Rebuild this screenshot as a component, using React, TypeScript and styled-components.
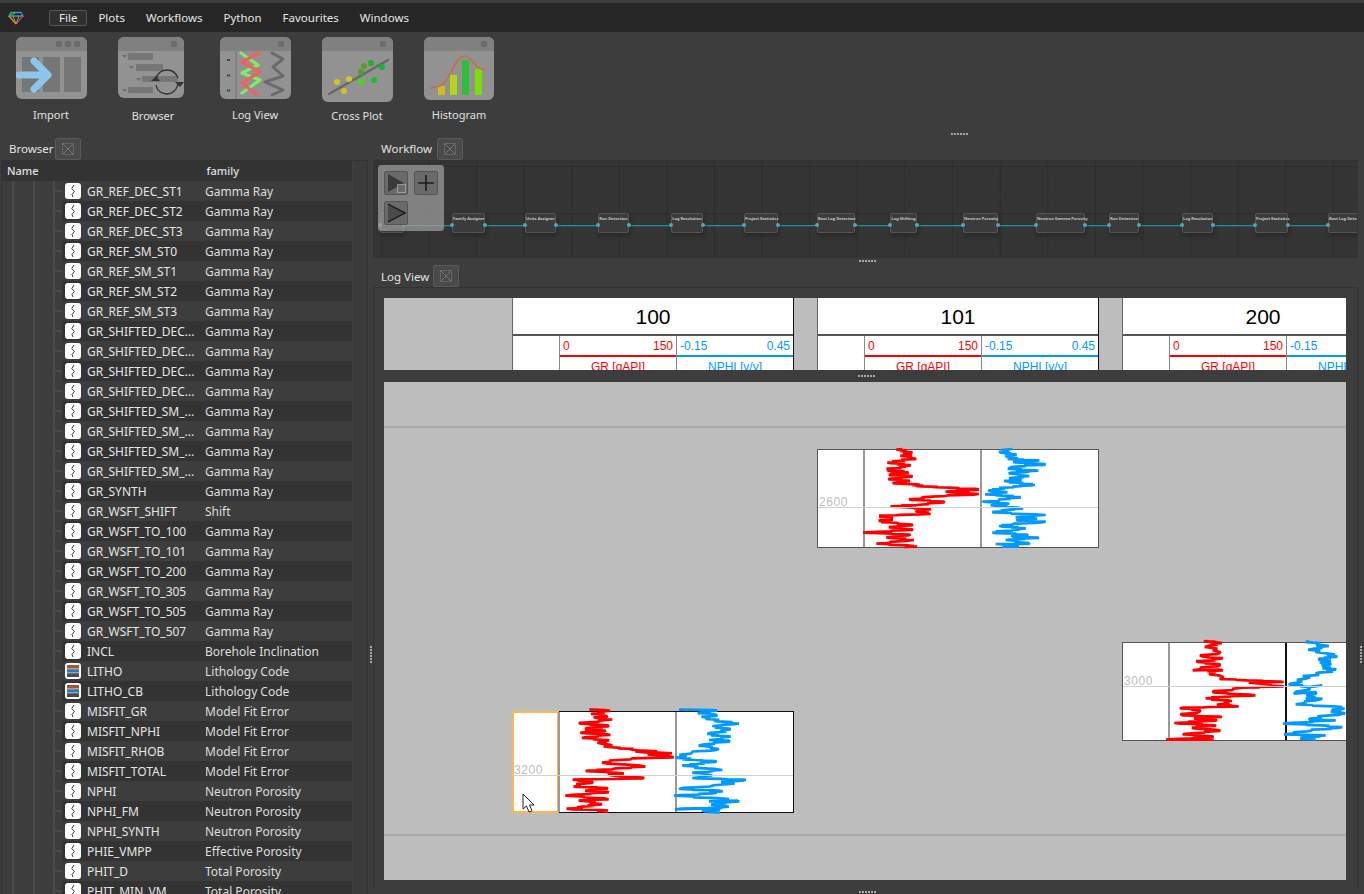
import styled, { createGlobalStyle } from 'styled-components';

const GlobalStyle = createGlobalStyle`
  html, body {
    margin: 0;
    background: #3d3d3d;
  }
  * {
    box-sizing: border-box;
  }
`;

const Root = styled.div`
  width: 1364px;
  height: 894px;
  overflow: hidden;
  display: flex;
  flex-direction: column;
  background: #3d3d3d;
  color: #e2e2e2;
  font-family: 'Noto Sans', 'Open Sans', sans-serif;
  font-size: 12px;
`;

const MenuBar = styled.div`
  height: 29px;
  margin-top: 3px;
  padding-left: 8px;
  display: flex;
  align-items: center;
  background: #262626;
`;

const MenuItems = styled.div`
  display: flex;
  margin-left: 25px;
  gap: 1px;
`;

const MenuItem = styled.div<{ $active?: boolean }>`
  height: 16px;
  padding: 0 9px;
  line-height: 14px;
  border: 1px solid ${(p) => (p.$active ? '#555' : 'transparent')};
  border-radius: 2px;
  background: ${(p) => (p.$active ? '#303030' : 'transparent')};
  color: #e6e6e6;
  font-size: 11.5px;
  white-space: nowrap;
`;

const Toolbar = styled.div`
  height: 105px;
  display: flex;
  flex-direction: column;
`;

const Tools = styled.div`
  display: flex;
  height: 98px;
`;

const Tool = styled.div<{ $nudge?: number }>`
  width: 102px;
  height: 98px;
  padding: 5px ${(p) => (p.$nudge ?? 0) * 2}px 0 0;
  position: relative;
  display: flex;
  justify-content: center;

  svg {
    display: block;
  }
`;

const ToolLabel = styled.div<{ $low?: boolean }>`
  position: absolute;
  left: 0;
  right: 0;
  top: ${(p) => (p.$low ? 76 : 75)}px;
  text-align: center;
  font-size: 11px;
  line-height: 16px;
  color: #e0e0e0;
`;

const Grip = styled.div<{ $vertical?: boolean }>`
  display: flex;
  flex-direction: ${(p) => (p.$vertical ? 'column' : 'row')};
  gap: 1px;

  i {
    width: 2px;
    height: 2px;
    background: #a8a8a8;
  }
`;

const ToolbarGrip = styled(Grip)`
  margin: 3px 0 0 951px;
`;

const Main = styled.div`
  flex: 1;
  display: flex;
  min-height: 0;
`;

const DockHeader = styled.div<{ $height?: number; $indent: number }>`
  height: ${(p) => p.$height ?? 23}px;
  display: flex;
  align-items: center;
  padding-left: ${(p) => p.$indent}px;
  font-size: 11.5px;
  color: #e4e4e4;
`;

const DockTitle = styled.div<{ $width: number }>`
  width: ${(p) => p.$width}px;
  white-space: nowrap;
`;

const CloseButton = styled.div`
  width: 26px;
  height: 22px;
  display: flex;
  align-items: center;
  justify-content: center;
  background: #4a4a4a;
  border: 1px solid #5a5a5a;
  border-radius: 2px;
`;

const LeftDock = styled.div`
  width: 368px;
  display: flex;
  flex-direction: column;
`;

const BrowserPanel = styled.div`
  flex: 1;
  display: flex;
  min-height: 0;
  margin-left: 1px;
  border: 1px solid #333;
  border-bottom: none;
  overflow: hidden;
`;

const TreeColumn = styled.div`
  width: 350px;
  flex-shrink: 0;
`;

const TreeHeader = styled.div`
  height: 20px;
  display: flex;
  align-items: center;
  padding: 0 0 2px 5px;
  background: #333;
  font-size: 11px;
  font-weight: 500;
  color: #e0e0e0;

  span:last-child {
    margin-left: 168px;
  }
`;

const ScrollTrack = styled.div`
  flex: 1;
  background: #3b3b3b;
  border-left: 1px solid #404040;
`;

const Row = styled.div`
  height: 20px;
  display: flex;
  align-items: center;
`;

const Guides = styled.div`
  width: 60px;
  height: 20px;
  flex-shrink: 0;
  background:
    linear-gradient(#4a4a4a, #4a4a4a) 10px 0 / 2px 100% no-repeat,
    linear-gradient(#4a4a4a, #4a4a4a) 31px 0 / 2px 100% no-repeat,
    linear-gradient(#4a4a4a, #4a4a4a) 51px 0 / 2px 100% no-repeat,
    linear-gradient(#4a4a4a, #4a4a4a) 52px 9px / 8px 2px no-repeat;
`;

const RowBody = styled.div<{ $odd: boolean }>`
  flex: 1;
  height: 20px;
  display: flex;
  align-items: center;
  padding-left: 3px;
  background: ${(p) => (p.$odd ? '#333333' : 'transparent')};
`;

const KindIcon = styled.div`
  width: 16px;
  height: 16px;
  flex-shrink: 0;
  background: #fff;
  border-radius: 3px;
  display: flex;
  align-items: center;
  justify-content: center;
`;

const RowName = styled.div`
  width: 118px;
  margin-left: 6px;
  white-space: nowrap;
  overflow: hidden;
  color: #e6e6e6;
`;

const RowFamily = styled.div`
  white-space: nowrap;
  color: #dedede;
`;

const Splitter = styled.div<{ $width: number }>`
  width: ${(p) => p.$width}px;
  flex-shrink: 0;
  display: flex;
  justify-content: center;
  padding-top: 509px;
`;

const RightDock = styled.div`
  width: 985px;
  display: flex;
  flex-direction: column;
`;

const WorkflowCanvas = styled.div`
  height: 98px;
  position: relative;
  overflow: hidden;
  border: 1px solid #333;
  background-color: #353535;
  background-image:
    linear-gradient(90deg, #2c2c2c 1px, transparent 1px),
    linear-gradient(#2c2c2c 1px, transparent 1px),
    linear-gradient(90deg, #333 1px, transparent 1px),
    linear-gradient(#333 1px, transparent 1px);
  background-size: 47.6px 47.6px, 47.6px 47.6px, 4.76px 4.76px, 4.76px 4.76px;
  background-position: 7px 5px, 7px 5px, 7px 5px, 7px 5px;
`;

const Edge = styled.div`
  position: absolute;
  left: 12px;
  right: 0;
  top: 64px;
  height: 1px;
  background: #2c8d95;
  box-shadow: 0 1px 1px #1f5b60;
`;

const FlowNode = styled.div<{ $left: number; $width: number }>`
  position: absolute;
  left: ${(p) => p.$left}px;
  width: ${(p) => p.$width}px;
  top: 52px;
  height: 20px;
  background: #3b3b3b;
  border: 1px solid #555;
  border-radius: 2px;
  box-shadow: 1px 3px 4px #282828;
  font-size: 4px;
  font-weight: 700;
  line-height: 9px;
  text-align: center;
  color: #c4c4c4;
  white-space: nowrap;
`;

const Port = styled.i<{ $side: 'left' | 'right' }>`
  position: absolute;
  top: 9px;
  ${(p) => p.$side}: -3px;
  width: 4px;
  height: 4px;
  border-radius: 50%;
  background: #46aab8;
`;

const FlowTools = styled.div`
  position: absolute;
  left: 4px;
  top: 4px;
  width: 66px;
  height: 66px;
  padding: 6px;
  display: flex;
  flex-wrap: wrap;
  align-content: flex-start;
  gap: 6px;
  background: rgba(160, 160, 160, 0.72);
  border-radius: 3px;
`;

const FlowButton = styled.div`
  width: 24px;
  height: 24px;
  display: flex;
  align-items: center;
  justify-content: center;
  background: #6a6a6a;
  border: 1px solid #555;
  border-radius: 2px;
`;

const CenterGrip = styled(Grip)`
  height: 7px;
  padding: 2px 0 0 486px;
`;

const LogPanel = styled.div`
  height: 601px;
  padding: 10px 11px 0 10px;
  border: 1px solid #333;
  border-bottom: none;
  display: flex;
  flex-direction: column;
`;

const LogHeader = styled.div`
  height: 72px;
  display: flex;
  gap: 23px;
  padding-left: 128px;
  overflow: hidden;
  background: #bdbdbd;
  font-family: 'Liberation Sans', Arial, sans-serif;
`;

const WellHeader = styled.div`
  width: 282px;
  flex-shrink: 0;
  height: 90px;
  background: #fff;
  border-left: 1px solid #666;
  border-right: 1px solid #111;
`;

const WellTitle = styled.div`
  height: 38px;
  line-height: 38px;
  text-align: center;
  font-size: 21px;
  color: #000;
  border-bottom: 2px solid #555;
`;

const TrackHeads = styled.div`
  display: flex;
  height: 52px;
`;

const DepthHead = styled.div`
  width: 46px;
`;

const TrackHead = styled.div<{ $color: string; $width: number }>`
  width: ${(p) => p.$width}px;
  color: ${(p) => p.$color};
  border-left: 1px solid #888;
  font-size: 12px;
`;

const ScaleRow = styled.div<{ $color: string }>`
  height: 21px;
  padding: 3px 3px 0 3px;
  line-height: 14px;
  display: flex;
  justify-content: space-between;
  border-bottom: 2px solid ${(p) => p.$color};
`;

const TrackName = styled.div`
  text-align: center;
  font-size: 12px;
  line-height: 20px;
`;

const HeaderGrip = styled(Grip)`
  height: 12px;
  padding: 5px 0 0 474px;
`;

const LogCanvas = styled.div`
  height: 498px;
  display: flex;
  gap: 23px;
  padding-left: 128px;
  overflow: hidden;
  position: relative;
  background:
    linear-gradient(#a9a9a9, #a9a9a9) 0 44px / 100% 2px no-repeat,
    linear-gradient(#a9a9a9, #a9a9a9) 0 452px / 100% 2px no-repeat,
    #bdbdbd;
  font-family: 'Liberation Sans', Arial, sans-serif;
`;

const WellColumn = styled.div<{ $top: number }>`
  width: 282px;
  flex-shrink: 0;
  padding-top: ${(p) => p.$top}px;
`;

const Chart = styled.div<{ $height: number; $frame: string }>`
  position: relative;
  width: 282px;
  height: ${(p) => p.$height}px;
  display: flex;
  background: #fff;
  border: 1px solid ${(p) => p.$frame};
`;

const DepthTrack = styled.div<{ $selected?: boolean }>`
  width: 47px;
  margin: -1px -1px -1px -1px;
  flex-shrink: 0;
  border: 2px solid ${(p) => (p.$selected ? '#ffb650' : 'transparent')};
`;

const CurveTrack = styled.div<{ $width: number; $line: string }>`
  width: ${(p) => p.$width}px;
  flex-shrink: 0;
  border-left: 2px solid ${(p) => p.$line};

  svg {
    display: block;
    overflow: visible;
    margin: -1px 0 0 -2px;
  }
`;

const DepthLine = styled.div<{ $y: number }>`
  position: absolute;
  left: 0;
  right: 0;
  top: ${(p) => p.$y}px;
  height: 1px;
  background: #d0d0d0;
`;

const DepthLabel = styled.div<{ $y: number }>`
  position: absolute;
  left: 1px;
  top: ${(p) => p.$y - 12}px;
  font-size: 12px;
  line-height: 14px;
  letter-spacing: 0.6px;
  color: #bcbcbc;
`;

const Pointer = styled.svg`
  position: absolute;
  left: 9px;
  top: 81px;
`;

const BottomGrip = styled(Grip)`
  padding: 3px 0 0 486px;
`;

function GripDots({ as: Comp = Grip, vertical }: { as?: typeof Grip; vertical?: boolean }) {
  return (
    <Comp $vertical={vertical}>
      {[0, 1, 2, 3, 4, 5].map((i) => (
        <i key={i} />
      ))}
    </Comp>
  );
}

function CloseIcon() {
  return (
    <svg width="14" height="14" viewBox="0 0 14 14" fill="none" stroke="#777" strokeWidth="1">
      <rect x="1.5" y="1.5" width="11" height="11" strokeDasharray="1.5 1" />
      <path d="M2 2l10 10M12 2L2 12" />
    </svg>
  );
}

function CurveGlyph() {
  return (
    <svg width="10" height="14" viewBox="0 0 10 14" fill="none" stroke="#333" strokeWidth="1">
      <path d="M6 1L3.8 4.5 6.4 7.5 4 10.5 5 13" />
    </svg>
  );
}

function LithoGlyph() {
  return (
    <svg width="12" height="12" viewBox="0 0 12 12">
      <rect width="12" height="3.6" fill="#a5562a" />
      <rect y="4.2" width="12" height="3.4" fill="#2f78b7" />
      <rect y="8.2" width="12" height="3.8" fill="#4c4c4c" />
    </svg>
  );
}

function Logo() {
  return (
    <svg width="16" height="14" viewBox="0 0 16 14" fill="none" strokeWidth="1.3">
      <path d="M3 1.5h5L1 5z" stroke="#2fae5a" />
      <path d="M8 1.5h5l2 3.5H1" stroke="#3d8fd0" />
      <path d="M1 5l7 8" stroke="#e8872a" />
      <path d="M15 5l-7 8" stroke="#c0348c" />
      <path d="M5 5l3 8 3-8" stroke="#b5a22c" strokeWidth="1" />
    </svg>
  );
}

function WindowFrame({
  width,
  height,
  dots,
  children,
}: {
  width: number;
  height: number;
  dots: number;
  children?: React.ReactNode;
}) {
  return (
    <svg width={width} height={height} viewBox={`0 0 ${width} ${height}`}>
      <rect width={width} height={height} rx="6" fill="#929292" />
      <path d={`M0 14V6a6 6 0 0 1 6-6h${width - 12}a6 6 0 0 1 6 6v8z`} fill="#808080" />
      {Array.from({ length: dots }).map((_, i) => (
        <rect key={i} x={width - 13 - i * 9} y="4" width="6" height="6" rx="1.5" fill="#6c6c6c" />
      ))}
      {children}
    </svg>
  );
}

function ImportIcon() {
  return (
    <WindowFrame width={71} height={62} dots={3}>
      <rect x="6" y="20" width="17" height="35" fill="#767676" />
      <rect x="27" y="20" width="17" height="35" fill="#767676" />
      <rect x="48" y="20" width="17" height="35" fill="#767676" />
      <path d="M3 38h29M18 24l14 14-14 14" fill="none" stroke="#8cc6ea" strokeWidth="7" strokeLinecap="round" strokeLinejoin="round" />
    </WindowFrame>
  );
}

function BrowserIcon() {
  return (
    <WindowFrame width={66} height={61} dots={1}>
      <path d="M4 18h5l-2.500 3zM11 29h5l-2.500 3zM18 41h5l-2.500 3zM4 52h5l-2.500 3z" fill="#6e6e6e" />
      <rect x="10" y="16" width="25" height="7" rx="1" fill="#767676" />
      <rect x="18" y="27" width="27" height="7" rx="1" fill="#767676" />
      <rect x="24" y="39" width="36" height="6" rx="1" fill="#767676" />
      <rect x="10" y="50" width="25" height="6" rx="1" fill="#767676" />
      <path d="M38 42c1-6 6-9 11-9 5 0 9 3 11 8M60 47c-1 6-6 10-11 10-5 0-10-3-11-9" fill="none" stroke="#333" strokeWidth="1.400" />
      <path d="M33 44l5-5 4 5zM57 45l5 5 4-5z" fill="#333" />
    </WindowFrame>
  );
}

function LogViewIcon() {
  return (
    <WindowFrame width={71} height={62} dots={1}>
      <rect x="15.500" y="14" width="1.500" height="48" fill="#7d7d7d" />
      <path d="M7 23h3.500M7 38.500h3.500M7 53.500h3.500" stroke="#333" strokeWidth="2" strokeDasharray="1.200 0.500" />
      <path d="M21 16l17 12-16 8 18 7-18 13" fill="none" stroke="#82ec6a" strokeWidth="3.200" strokeLinecap="round" strokeLinejoin="round" />
      <path d="M39 16l-17 9 18 10-18 11 15 12" fill="none" stroke="#f4605c" strokeWidth="3.200" strokeLinecap="round" strokeLinejoin="round" />
      <path d="M52 16l11 6-10 8 10 9-18 6 18 8-11 5" fill="none" stroke="#6a6a6a" strokeWidth="3" strokeLinecap="round" strokeLinejoin="round" />
    </WindowFrame>
  );
}

function CrossPlotIcon() {
  const dots: [number, number, string][] = [
    [15, 45, '#d8c21e'], [27, 42, '#c8cc1e'], [22, 54, '#d8c21e'], [39, 45, '#3fdc16'], [39, 35, '#5a9c22'],
    [42, 29, '#5a9c22'], [49, 26, '#18b52c'], [60, 30, '#18b52c'], [52, 43, '#10c428'],
  ];
  return (
    <WindowFrame width={71} height={65} dots={1}>
      <path d="M7 57L66 23" stroke="#686868" strokeWidth="2.500" strokeLinecap="round" />
      {dots.map(([x, y, c], i) => (
        <circle key={i} cx={x} cy={y} r="3" fill={c} />
      ))}
    </WindowFrame>
  );
}

function HistogramIcon() {
  return (
    <WindowFrame width={70} height={63} dots={1}>
      <rect x="14" y="49" width="7" height="9" fill="#d2bc20" />
      <rect x="26" y="38" width="7" height="20" fill="#b8d418" />
      <rect x="38" y="23" width="7" height="35" fill="#2fbd3c" />
      <rect x="51" y="32" width="7" height="26" fill="#7fdc08" />
      <path d="M6 51c10-1 14-2 20-14 6-12 10-18 15-18 5 0 9 9 14 12 2 1 4 2 6 2" fill="none" stroke="#c96e3e" strokeWidth="1.500" />
    </WindowFrame>
  );
}

function PlayIcon() {
  return (
    <svg width="22" height="22" viewBox="0 0 22 22">
      <path d="M3 2l16 9-16 9z" fill="#3a3a3a" />
      <rect x="12.500" y="12.500" width="8" height="8" fill="#6a6a6a" stroke="#cfcfcf" strokeDasharray="1 1" />
    </svg>
  );
}

function PlusIcon() {
  return (
    <svg width="18" height="18" viewBox="0 0 18 18" stroke="#1c1c1c" strokeWidth="1.600">
      <path d="M9 1v16M1 9h16" />
    </svg>
  );
}

function StepIcon() {
  return (
    <svg width="22" height="22" viewBox="0 0 22 22">
      <path d="M3 2l17 9-17 9z" fill="#4a4a4a" />
      <path d="M3 2l17 9-17 9" fill="none" stroke="#151515" strokeWidth="1.400" />
    </svg>
  );
}

// traced at 3x so the spikes stay readable, the viewBox scales them back down
function Curve({ width, height, points, color }: { width: number; height: number; points: string; color: string }) {
  return (
    <svg width={width} height={height} viewBox={`0 0 ${width * 3} ${height * 3}`}>
      <polyline points={points} fill="none" stroke={color} strokeWidth="8" strokeLinejoin="bevel" />
    </svg>
  );
}

const jitter = [16, -20, 9, -13, 22, -8, 18, -24, 6, -15, 12];

// the trace only holds the big swings, fill in the fine noise between them
function toPoints(trace: number[][], dx: number, dy: number) {
  const out: string[] = [];
  trace.forEach(([x, y], i) => {
    out.push(`${x - dx},${y - dy}`);
    const next = trace[i + 1];
    if (next && next[1] - y >= 4) {
      [1, 2, 3].forEach((step) => {
        const t = step / 4;
        const midX = x + (next[0] - x) * t + jitter[(i * 3 + step) % jitter.length];
        out.push(`${midX - dx},${y + (next[1] - y) * t - dy}`);
      });
    }
  });
  return out.join(' ');
}

const gr2600 = [[310,27],[318,35],[322,45],[345,55],[320,60],[265,68],[335,75],[300,82],[265,90],[325,97],[270,104],[340,110],[268,118],[330,123],[285,130],[355,133],[350,138],[450,143],[540,148],[440,155],[540,162],[400,170],[330,178],[435,185],[350,195],[275,200],[395,207],[350,213],[395,222],[240,227],[280,235],[240,243],[300,250],[335,256],[270,262],[340,270],[192,278],[335,284],[262,292],[345,300],[232,311],[345,318],[320,322]];
const nphi2600 = [[640,27],[605,38],[645,45],[632,52],[650,58],[715,62],[650,67],[740,73],[650,80],[630,87],[718,92],[640,98],[675,107],[650,113],[665,118],[625,124],[660,130],[708,135],[640,140],[600,147],[570,152],[625,157],[568,162],[610,167],[660,173],[600,180],[560,186],[625,192],[590,197],[665,205],[630,210],[580,217],[740,225],[650,232],[705,235],[655,240],[740,245],[640,253],[600,258],[680,265],[640,270],[580,278],[680,284],[640,290],[720,294],[620,300],[690,312],[590,312],[660,320],[610,320]];
const gr3200 = [[272,26],[318,28],[295,38],[318,45],[300,52],[325,58],[245,69],[330,75],[260,83],[320,90],[245,96],[335,103],[250,112],[330,120],[305,128],[345,140],[395,146],[520,158],[410,152],[525,170],[400,173],[310,186],[440,198],[340,205],[262,210],[370,217],[340,224],[435,233],[222,237],[280,243],[225,258],[325,262],[260,270],[330,275],[200,285],[330,296],[240,300],[310,310],[250,318],[220,326],[310,328],[320,334]];
const nphi3200 = [[540,27],[640,28],[610,36],[650,42],[620,50],[645,60],[720,69],[640,76],[695,86],[625,100],[695,108],[630,118],[690,120],[610,132],[660,145],[580,155],[528,170],[590,178],[650,182],[595,190],[550,195],[670,208],[590,215],[630,222],[580,232],[740,237],[670,245],[690,250],[540,265],[660,270],[640,278],[525,285],[690,295],[630,302],[715,300],[650,310],[690,318],[528,326],[670,322],[620,332],[660,336]];
const gr3000 = [[300,32],[322,36],[305,45],[335,65],[280,78],[335,85],[270,95],[335,103],[252,120],[330,118],[310,127],[335,145],[415,150],[525,155],[420,157],[525,168],[400,172],[315,186],[440,195],[330,200],[292,204],[370,212],[330,222],[390,228],[225,232],[275,240],[222,255],[340,260],[260,265],[325,270],[197,278],[320,285],[250,292],[335,302],[222,312],[315,320],[172,328],[315,328]];
const nphi3000 = [[600,32],[645,45],[615,55],[640,68],[685,78],[630,85],[665,100],[640,110],[680,118],[620,130],[590,145],[545,160],[600,170],[640,165],[555,190],[620,185],[590,205],[640,205],[560,222],[700,230],[670,240],[708,250],[660,255],[600,268],[680,270],[522,280],[640,285],[690,292],[610,300],[525,312],[650,315],[575,322],[620,328]];

const wells = [
  {
    name: '100',
    top: 329,
    height: 102,
    frame: '#111',
    depth: '3200',
    depthY: 63,
    selected: true,
    nphiLine: '#999',
    gr: toPoints(gr3200, 178, 31),
    nphi: toPoints(nphi3200, 528, 31),
  },
  {
    name: '101',
    top: 67,
    height: 99,
    frame: '#555',
    depth: '2600',
    depthY: 57,
    selected: false,
    nphiLine: '#999',
    gr: toPoints(gr2600, 192, 27),
    nphi: toPoints(nphi2600, 543, 27),
  },
  {
    name: '200',
    top: 260,
    height: 99,
    frame: '#555',
    depth: '3000',
    depthY: 43,
    selected: false,
    nphiLine: '#111',
    gr: toPoints(gr3000, 178, 35),
    nphi: toPoints(nphi3000, 528, 35),
  },
];

const nodes = [
  { title: '', left: 6, width: 24 },
  { title: 'Family Assigner', left: 78, width: 33 },
  { title: 'Units Assigner', left: 151, width: 31 },
  { title: 'Run Detection', left: 224, width: 31 },
  { title: 'Log Resolution', left: 297, width: 32 },
  { title: 'Project Statistics', left: 370, width: 34 },
  { title: 'Best Log Detection', left: 443, width: 38 },
  { title: 'Log Shifting', left: 516, width: 27 },
  { title: 'Neutron Porosity', left: 589, width: 35 },
  { title: 'Neutron Gamma Porosity', left: 662, width: 49 },
  { title: 'Run Detection', left: 735, width: 30 },
  { title: 'Log Resolution', left: 808, width: 31 },
  { title: 'Project Statistics', left: 881, width: 33 },
  { title: 'Best Log Detection', left: 954, width: 38 },
];

const logs: [string, string, boolean?][] = [
  ['GR_REF_DEC_ST1', 'Gamma Ray'],
  ['GR_REF_DEC_ST2', 'Gamma Ray'],
  ['GR_REF_DEC_ST3', 'Gamma Ray'],
  ['GR_REF_SM_ST0', 'Gamma Ray'],
  ['GR_REF_SM_ST1', 'Gamma Ray'],
  ['GR_REF_SM_ST2', 'Gamma Ray'],
  ['GR_REF_SM_ST3', 'Gamma Ray'],
  ['GR_SHIFTED_DEC...', 'Gamma Ray'],
  ['GR_SHIFTED_DEC...', 'Gamma Ray'],
  ['GR_SHIFTED_DEC...', 'Gamma Ray'],
  ['GR_SHIFTED_DEC...', 'Gamma Ray'],
  ['GR_SHIFTED_SM_...', 'Gamma Ray'],
  ['GR_SHIFTED_SM_...', 'Gamma Ray'],
  ['GR_SHIFTED_SM_...', 'Gamma Ray'],
  ['GR_SHIFTED_SM_...', 'Gamma Ray'],
  ['GR_SYNTH', 'Gamma Ray'],
  ['GR_WSFT_SHIFT', 'Shift'],
  ['GR_WSFT_TO_100', 'Gamma Ray'],
  ['GR_WSFT_TO_101', 'Gamma Ray'],
  ['GR_WSFT_TO_200', 'Gamma Ray'],
  ['GR_WSFT_TO_305', 'Gamma Ray'],
  ['GR_WSFT_TO_505', 'Gamma Ray'],
  ['GR_WSFT_TO_507', 'Gamma Ray'],
  ['INCL', 'Borehole Inclination'],
  ['LITHO', 'Lithology Code', true],
  ['LITHO_CB', 'Lithology Code', true],
  ['MISFIT_GR', 'Model Fit Error'],
  ['MISFIT_NPHI', 'Model Fit Error'],
  ['MISFIT_RHOB', 'Model Fit Error'],
  ['MISFIT_TOTAL', 'Model Fit Error'],
  ['NPHI', 'Neutron Porosity'],
  ['NPHI_FM', 'Neutron Porosity'],
  ['NPHI_SYNTH', 'Neutron Porosity'],
  ['PHIE_VMPP', 'Effective Porosity'],
  ['PHIT_D', 'Total Porosity'],
  ['PHIT_MIN_VM', 'Total Porosity'],
];

export default function App() {
  return (
    <Root>
      <GlobalStyle />

      <MenuBar>
        <Logo />
        <MenuItems>
          <MenuItem $active>File</MenuItem>
          <MenuItem>Plots</MenuItem>
          <MenuItem>Workflows</MenuItem>
          <MenuItem>Python</MenuItem>
          <MenuItem>Favourites</MenuItem>
          <MenuItem>Windows</MenuItem>
        </MenuItems>
      </MenuBar>

      <Toolbar>
        <Tools>
          <Tool><ImportIcon /><ToolLabel>Import</ToolLabel></Tool>
          <Tool $nudge={2}><BrowserIcon /><ToolLabel $low>Browser</ToolLabel></Tool>
          <Tool><LogViewIcon /><ToolLabel>Log View</ToolLabel></Tool>
          <Tool><CrossPlotIcon /><ToolLabel $low>Cross Plot</ToolLabel></Tool>
          <Tool><HistogramIcon /><ToolLabel>Histogram</ToolLabel></Tool>
        </Tools>
        <GripDots as={ToolbarGrip} />
      </Toolbar>

      <Main>
        <LeftDock>
          <DockHeader $indent={9}>
            <DockTitle $width={46}>Browser</DockTitle>
            <CloseButton><CloseIcon /></CloseButton>
          </DockHeader>
          <BrowserPanel>
            <TreeColumn>
              <TreeHeader>
                <span>Name</span>
                <span>family</span>
              </TreeHeader>
              {logs.map(([name, family, litho], index) => (
                <Row key={index}>
                  <Guides />
                  <RowBody $odd={index % 2 === 1}>
                    <KindIcon>{litho ? <LithoGlyph /> : <CurveGlyph />}</KindIcon>
                    <RowName>{name}</RowName>
                    <RowFamily>{family}</RowFamily>
                  </RowBody>
                </Row>
              ))}
            </TreeColumn>
            <ScrollTrack />
          </BrowserPanel>
        </LeftDock>

        <Splitter $width={5}>
          <GripDots vertical />
        </Splitter>

        <RightDock>
          <DockHeader $indent={8}>
            <DockTitle $width={56}>Workflow</DockTitle>
            <CloseButton><CloseIcon /></CloseButton>
          </DockHeader>
          <WorkflowCanvas>
            <Edge />
            {nodes.map((node, index) => (
              <FlowNode key={index} $left={node.left} $width={node.width}>
                {node.title}
                <Port $side="left" />
                <Port $side="right" />
              </FlowNode>
            ))}
            <FlowTools>
              <FlowButton><PlayIcon /></FlowButton>
              <FlowButton><PlusIcon /></FlowButton>
              <FlowButton><StepIcon /></FlowButton>
            </FlowTools>
          </WorkflowCanvas>
          <GripDots as={CenterGrip} />

          <DockHeader $height={22} $indent={8}>
            <DockTitle $width={52}>Log View</DockTitle>
            <CloseButton><CloseIcon /></CloseButton>
          </DockHeader>
          <LogPanel>
            <LogHeader>
              {wells.map((well) => (
                <WellHeader key={well.name}>
                  <WellTitle>{well.name}</WellTitle>
                  <TrackHeads>
                    <DepthHead />
                    <TrackHead $color="#ff0000" $width={117}>
                      <ScaleRow $color="#ff0000"><span>0</span><span>150</span></ScaleRow>
                      <TrackName>GR [gAPI]</TrackName>
                    </TrackHead>
                    <TrackHead $color="#0099ff" $width={117}>
                      <ScaleRow $color="#0099ff"><span>-0.15</span><span>0.45</span></ScaleRow>
                      <TrackName>NPHI [v/v]</TrackName>
                    </TrackHead>
                  </TrackHeads>
                </WellHeader>
              ))}
            </LogHeader>
            <GripDots as={HeaderGrip} />
            <LogCanvas>
              {wells.map((well) => (
                <WellColumn key={well.name} $top={well.top}>
                  <Chart $height={well.height} $frame={well.frame}>
                    <DepthTrack $selected={well.selected} />
                    <CurveTrack $width={117} $line="#999">
                      <Curve width={115} height={well.height - 2} points={well.gr} color="#ff0000" />
                    </CurveTrack>
                    <CurveTrack $width={117} $line={well.nphiLine}>
                      <Curve width={115} height={well.height - 2} points={well.nphi} color="#0099ff" />
                    </CurveTrack>
                    <DepthLine $y={well.depthY} />
                    <DepthLabel $y={well.depthY}>{well.depth}</DepthLabel>
                    {well.selected && (
                      <Pointer width="14" height="20" viewBox="0 0 14 20">
                        <path d="M1 1v15l3.500-3 2.500 6 3-1.200-2.500-5.800H12z" fill="#fff" stroke="#222" strokeWidth="1" />
                      </Pointer>
                    )}
                  </Chart>
                </WellColumn>
              ))}
            </LogCanvas>
          </LogPanel>
          <GripDots as={BottomGrip} />
        </RightDock>

        <Splitter $width={6}>
          <GripDots vertical />
        </Splitter>
      </Main>
    </Root>
  );
}
